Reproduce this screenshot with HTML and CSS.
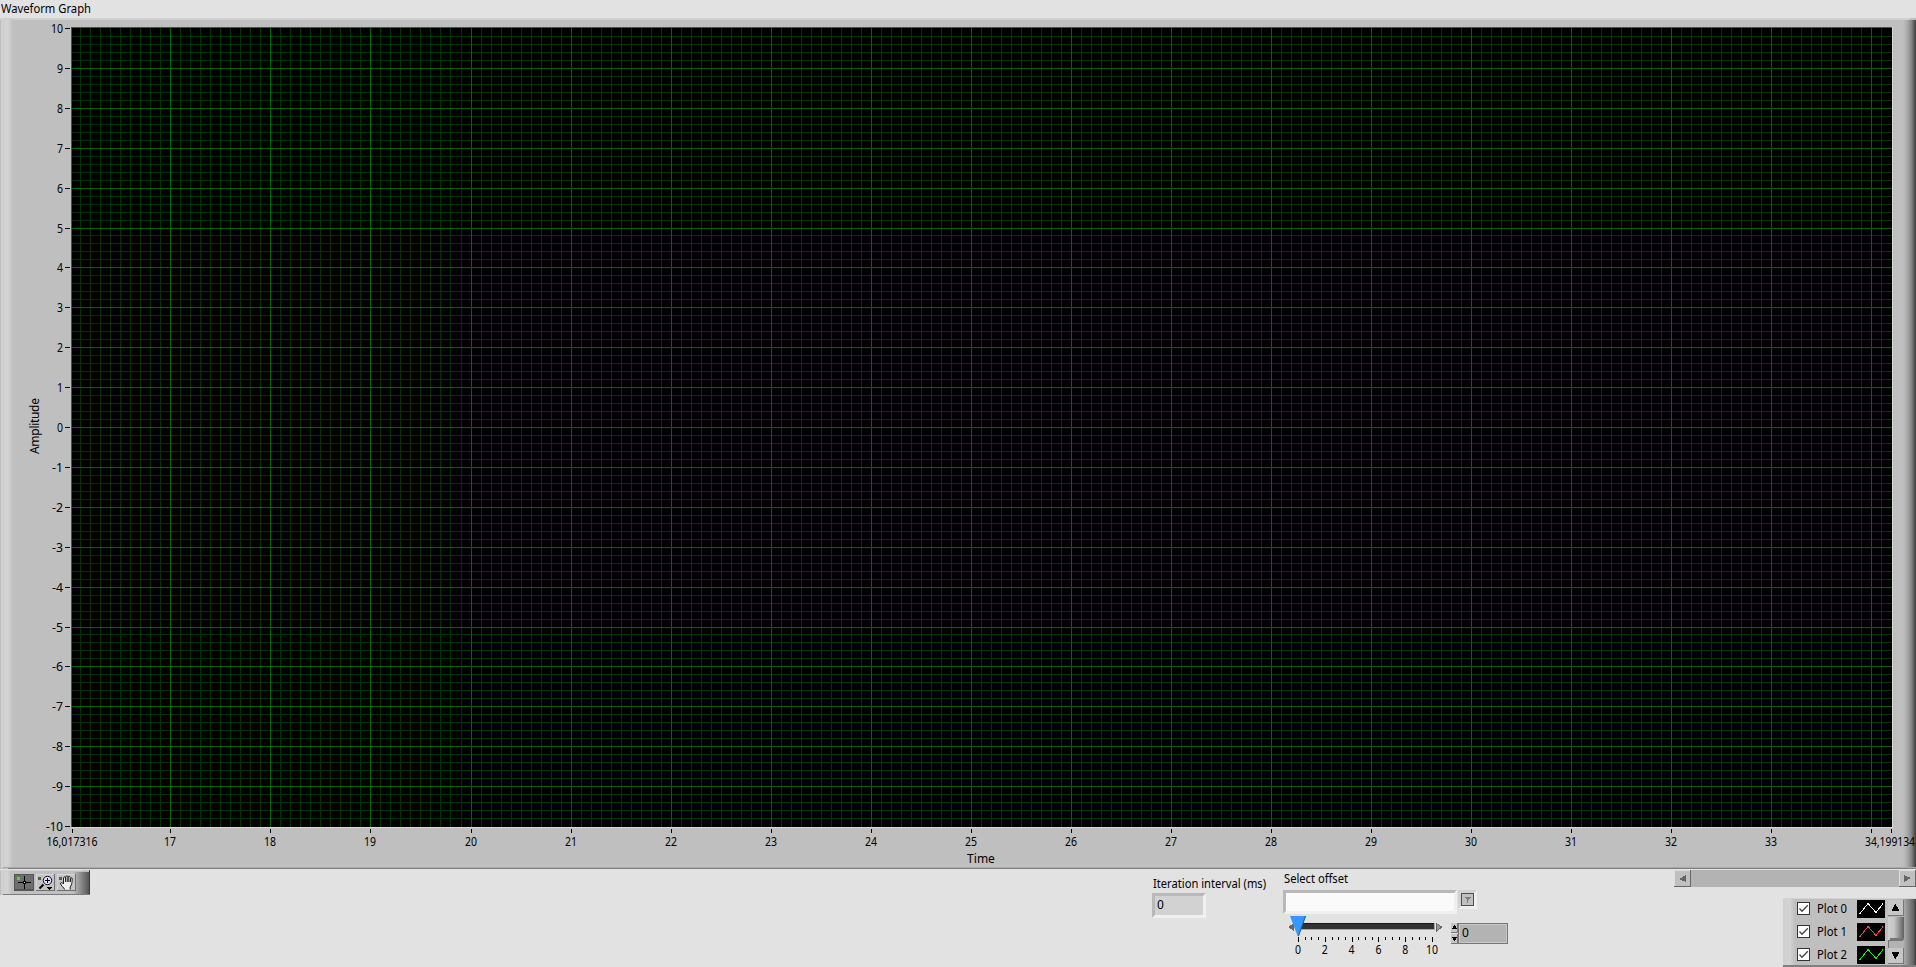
FILE: index.html
```html
<!DOCTYPE html>
<html lang="en">
<head>
<meta charset="utf-8">
<title>Waveform Graph</title>
<link rel="stylesheet" href="styles.css">
</head>
<body>
<svg width="0" height="0" class="symbols">
  <symbol id="check" viewBox="0 0 13 13"><rect x=".5" y=".5" width="12" height="12" fill="#fff" stroke="#333"/><path d="M2.500 6.500 5 9.200l5.800-6" fill="none" stroke="#444" stroke-width="1.300"/></symbol>
  <symbol id="wave" viewBox="0 0 28 18"><path d="M2 13.500h1l8-10 8 9 7-9" fill="none" stroke="currentColor" shape-rendering="crispEdges"/></symbol>
</svg>
<main class="panel">
  <div class="title"><span class="fit" data-w="90">Waveform Graph</span></div>
  <section class="graph">
    <svg class="chart" id="chart" width="1916" height="851" shape-rendering="crispEdges">
      <defs>
        <linearGradient id="right"><stop offset="0" stop-color="#bfbfbf"/><stop offset=".3" stop-color="#adadad"/><stop offset=".65" stop-color="#858585"/><stop offset="1" stop-color="#3c3c3c"/></linearGradient>
        <linearGradient id="left"><stop offset="0" stop-color="#d0d0d0"/><stop offset=".6" stop-color="#d3d3d3"/><stop offset="1" stop-color="#bfbfbf"/></linearGradient>
      </defs>
      <rect width="1916" height="851" fill="#bfbfbf"/>
      <rect y="0" width="1910" height="2" fill="#d0d0d0"/>
      <rect x="1" y="1" width="12" height="849" fill="url(#left)"/>
      <rect x="1903" y="2" width="13" height="847" fill="url(#right)"/>
      <rect x="3" y="849" width="1913" height="1" fill="#aaa"/>
      <rect x="8" y="850" width="1908" height="1" fill="#808080"/>
      <rect x="71" y="9" width="1822" height="801" fill="#d9d9d9"/>
      <path d="M71 9h1821v1H72v799h-1z" fill="#505050"/>
      <rect x="72" y="10" width="1820" height="799" fill="#000"/>
      <g id="grid"></g>
      <g id="labels" class="scale"></g>
      <text class="axis" x="981" y="845" text-anchor="middle">Time</text>
      <text class="axis" transform="translate(39 408) rotate(-90)" text-anchor="middle" textLength="56">Amplitude</text>
    </svg>
  </section>
  <section class="controls">
    <div class="palette">
      <svg width="90" height="25" shape-rendering="crispEdges">
        <defs><linearGradient id="pal"><stop offset="0" stop-color="#bfbfbf"/><stop offset="1" stop-color="#555"/></linearGradient></defs>
        <rect width="90" height="25" fill="#c0c0c0"/><rect width="82" height="1" fill="#d2d2d2"/>
        <rect x="1" y="1" width="11" height="23" fill="url(#left)"/>
        <rect x="73" y="2" width="16" height="22" fill="url(#pal)"/><rect x="89" width="1" height="25" fill="#3c3c3c"/><rect x="3" y="24" width="87" height="1" fill="#7c7c7c"/>
        <path d="M14 4h20v17H14z" fill="#555"/><path d="M15 5h18v14H15z" fill="#6e6e6e"/>
        <path d="M36 4h19v16H36zM57 4h19v16H57z" fill="#d7d7d7"/><path d="M54 4h1v17H36v-1h18zM75 4h1v17H57v-1h18z" fill="#6f6f6f"/>
        <path d="M37 5h17v15H37zM58 5h17v15H58z" fill="#c3c3c3"/>
        <path d="M18 12.500h13M24.500 6v13" stroke="#000"/><path d="M23 11h3v3h-3z" fill="#000"/><path d="M24 12h1v1h-1z" fill="#ccc"/>
        <path d="M17 7h3v3h-3z" fill="#45e51b"/><path d="M38 7h3v3h-3zM59 7h3v3h-3z" fill="#4c6545"/>
        <g shape-rendering="auto"><path d="m43.500 14.500-4 4" stroke="#000" stroke-width="2"/><circle cx="47.500" cy="10.500" r="4.200" fill="#dcdcff" stroke="#111"/></g>
        <path d="M45 10.500h5M47.500 8v5" stroke="#000"/><path d="M46 17h6l-3 3z" fill="#000"/>
        <path shape-rendering="auto" d="M64.500 19.500c0-2-4-3.500-4-6.500 1-1 2.500 0 3 1V8c.5-1.500 2-1.500 2.200 0v4V7c.5-1.500 2-1.500 2.300 0v5-5c.5-1 2-1 2.200.5V12l.5-3.500c.5-1 1.500-1 1.500.5 0 4-.7 6-2 8v2.500" fill="#eee" stroke="#222"/>
      </svg>
    </div>
    <div class="interval"><div><span class="fit" data-w="113">Iteration interval (ms)</span></div><div class="numeric">0</div></div>
    <div class="offset">
      <div><span class="fit" data-w="64">Select offset</span></div>
      <div class="combo"><div class="field"></div><div class="drop"><svg width="13" height="13" shape-rendering="crispEdges"><rect width="13" height="13" fill="#505050"/><rect x="1" y="1" width="11" height="11" fill="#c0c0c0"/><path d="M3 4h7L7 7v3H6V7z" fill="#808080"/></svg></div></div>
      <div class="slider-row">
        <svg class="slider" id="slider" width="166" height="46" shape-rendering="crispEdges">
          <rect x="15" y="7" width="136" height="7" fill="#aaa"/><rect x="15" y="7" width="135" height="6" fill="#333"/><rect x="15" y="7" width="135" height="1" fill="#161616"/>
          <path d="M4 11l6-4v8zM152 7v9l7-5z" fill="#666"/><path d="M153 8v6l4-3z" fill="#999"/>
          <path d="M6 0h16l-8 21z" fill="#3399ff" shape-rendering="auto"/><path d="M21.500 0l-7 20" stroke="#215a94" shape-rendering="auto"/>
          <g id="sliderScale" class="scale"></g>
        </svg>
        <svg class="spin" width="7" height="21" shape-rendering="crispEdges"><path d="M0 0h7v10H0zM0 11h7v10H0z" fill="#777"/><path d="M0 0h6v9H0zM0 11h6v9H0z" fill="#c6c6c6"/><path d="M3 2h1v1h1v2h1v1H1V5h1V3h1zM1 14h5v1H5v2H4v1H3v-1H2v-2H1z" fill="#000"/></svg>
        <div class="digital">0</div>
      </div>
    </div>
    <div class="side">
      <svg class="scroll" width="242" height="17" shape-rendering="crispEdges">
        <rect width="242" height="17" fill="#b3b3b3"/><path d="M0 0h17v17H0zM225 0h17v17h-17z" fill="#dedede"/><path d="M16 0h1v17H0v-1h16zM241 0h1v17h-17v-1h16z" fill="#666"/><path d="M1 1h15v15H1zM226 1h15v15h-15z" fill="#c0c0c0"/><path d="M5 9l7-4v7zM230 5v7l7-4z" fill="#666"/>
      </svg>
      <div class="legend">
        <div class="plots">
          <label><svg width="13" height="13"><use href="#check"/></svg><span class="fit" data-w="30">Plot 0</span><svg class="swatch white" width="28" height="18"><use href="#wave"/></svg></label>
          <label><svg width="13" height="13"><use href="#check"/></svg><span class="fit" data-w="30">Plot 1</span><svg class="swatch red" width="28" height="18"><use href="#wave"/></svg></label>
          <label><svg width="13" height="13"><use href="#check"/></svg><span class="fit" data-w="30">Plot 2</span><svg class="swatch green" width="28" height="18"><use href="#wave"/></svg></label>
        </div>
        <svg width="16" height="64" shape-rendering="crispEdges">
          <defs><linearGradient id="thumb"><stop offset="0" stop-color="#d0d0d0"/><stop offset=".4" stop-color="#c4c4c4"/><stop offset="1" stop-color="#606060"/></linearGradient></defs>
          <rect width="16" height="64" fill="#b3b3b3"/><path d="M0 0h16v16H0zM0 48h16v16H0z" fill="#777"/><path d="M0 0h15v15H0zM0 48h15v15H0z" fill="#c6c6c6"/>
          <path d="M7 4h1l1 3h1l1 4H4l1-4h1zM4 52h7l-1 4H9l-1 3H7l-1-3H5z" fill="#000"/>
          <rect x="0" y="17" width="16" height="23" fill="url(#thumb)"/><rect x="2" y="38" width="14" height="2" fill="#777"/><path d="M0 40h15v1H1v7H0z" fill="#777"/>
        </svg>
      </div>
    </div>
  </section>
</main>
<script src="script.js"></script>
</body>
</html>
```
FILE: styles.css
```css
* { box-sizing: border-box; }
html, body { height: 967px; overflow: hidden; }
body { margin: 0; background: #e2e2e2; color: #000; font: 12px/16px "Noto Sans", "Open Sans", sans-serif; }
.panel { width: 1916px; height: 967px; display: flex; flex-direction: column; overflow: hidden; }
.title { height: 18px; padding: 1px 0 0 1px; }
.graph, .chart { height: 851px; display: block; }
.fit { display: inline-block; white-space: nowrap; transform-origin: 0 50%; }
.scale { font-size: 12px; }
.axis { font-size: 12px; }
.controls { height: 98px; display: flex; align-items: flex-start; }
.palette { width: 1152px; padding-top: 1px; }
svg { display: block; flex: none; }
.interval { width: 131px; padding-top: 7px; }
.interval > div:first-child { padding-left: 1px; }
.numeric { width: 54px; height: 25px; margin-top: 1px; border: 3px solid; border-color: #b8b8b8 #f0f0f0 #f0f0f0 #b8b8b8; background: #d2d2d2; padding-left: 2px; line-height: 18px; }
.offset { width: 391px; padding-top: 2px; }
.offset > div:first-child { padding-left: 1px; }
.combo { display: flex; gap: 1px; height: 24px; margin-top: 3px; }
.field { width: 174px; height: 24px; border: 3px solid; border-color: #b8b8b8 #f0f0f0 #f0f0f0 #b8b8b8; background: #fafafa; }
.drop { width: 19px; height: 19px; border: 3px solid; border-color: #d2d2d2 #efefef #efefef #d2d2d2; }
.slider-row { display: flex; padding: 2px 0 0 1px; }
.spin { margin: 7px 0 0 1px; }
.digital { width: 50px; height: 21px; margin-top: 7px; border: 1px solid #777; outline: 1px solid #c8c8c8; outline-offset: -2px; background: #b3b3b3; padding-left: 3px; line-height: 18px; }
.side { width: 242px; padding-top: 1px; }
.legend { width: 133px; height: 69px; margin: 11px 0 0 109px; padding: 1px 0 0 14px; display: flex; gap: 2px; background: linear-gradient(90deg, #d0d0d0, #d3d3d3 7px, #bfbfbf 12px, #bfbfbf 118px, #606060 131px, #333); border-top: 1px solid #d3d3d3; border-bottom: 2px solid #808080; }
.plots { display: flex; flex-direction: column; gap: 5px; width: 89px; }
.plots label { height: 18px; display: flex; align-items: center; }
.plots label > svg:first-child { margin: -1px 7px 0 0; }
.plots .fit { width: 40px; margin-top: -1px; }
.swatch { background: #000; }
.white { color: #fff; }
.red { color: #ff4040; }
.green { color: #18f018; }
.symbols { position: absolute; }
```
FILE: script.js
```js
const NS = 'http://www.w3.org/2000/svg';
const rect = (g, x, y, w, h, fill) => {
  const r = document.createElementNS(NS, 'rect');
  Object.entries({ x, y, width: w, height: h, fill }).forEach(([k, v]) => r.setAttribute(k, v));
  g.append(r);
};
const text = (g, x, y, s, anchor, length) => {
  const t = document.createElementNS(NS, 'text');
  t.setAttribute('x', x);
  t.setAttribute('y', y);
  t.setAttribute('text-anchor', anchor);
  t.setAttribute('textLength', length);
  t.setAttribute('lengthAdjust', 'spacingAndGlyphs');
  t.textContent = s;
  g.append(t);
};
const width = s => [...String(s)].reduce((n, c) => n + (c === '-' ? 5 : 6), 0);
const grid = document.getElementById('grid');
const labels = document.getElementById('labels');
const px = v => Math.round(72 + (v - 16.017316) * 100.06);
const py = v => Math.round(10 + (10 - v) * 39.9);

for (let i = 161; i <= 341; i++) if (i % 10) rect(grid, px(i / 10), 10, 1, 799, '#003300');
for (let i = -49; i < 50; i++) if (i % 5) rect(grid, 72, py(i / 5), 1820, 1, '#003300');
for (let v = 17; v <= 34; v++) rect(grid, px(v), 10, 1, 799, '#006600');
for (let v = -9; v <= 9; v++) rect(grid, 72, py(v), 1820, 1, '#006600');

for (let v = -10; v <= 10; v++) {
  rect(labels, 65, py(v), 5, 1, '#000');
  text(labels, 63, py(v) + 5, v, 'end', width(v));
}
for (let v = 17; v <= 34; v++) {
  rect(labels, px(v), 811, 1, 4, '#000');
  if (v < 34) text(labels, px(v), 828, v, 'middle', 12);
}
rect(labels, 72, 811, 1, 4, '#000');
rect(labels, 1891, 811, 1, 4, '#000');
text(labels, 72, 828, '16,017316', 'middle', 51);
text(labels, 1890, 828, '34,199134', 'middle', 50);

const scale = document.getElementById('sliderScale');
for (let i = 0; i <= 20; i++) rect(scale, 14 + Math.round(i * 6.7), 21, 1, i % 4 ? 3 : 5, '#000');
for (let v = 0; v <= 10; v += 2) text(scale, 14 + v * 13.4, 38, v, 'middle', width(v));

document.querySelectorAll('.fit').forEach(e => {
  const range = document.createRange();
  range.selectNodeContents(e);
  e.style.transform = `scaleX(${e.dataset.w / range.getBoundingClientRect().width})`;
});
```
